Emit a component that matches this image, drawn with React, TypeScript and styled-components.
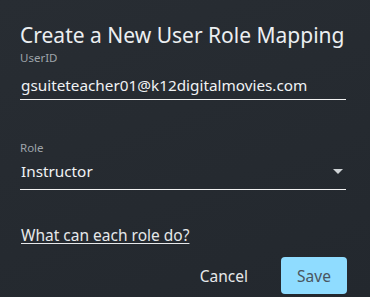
import React from 'react';
import styled, { createGlobalStyle } from 'styled-components';

const GlobalStyle = createGlobalStyle`
  html, body {
    margin: 0;
    padding: 0;
    background: #252a30;
  }
  body {
    font-family: 'Noto Sans', 'Open Sans', sans-serif;
  }
`;

const Dialog = styled.div`
  width: 370px;
  height: 297px;
  box-sizing: border-box;
  padding: 21px 24px 0 20px;
  background: linear-gradient(160deg, #282d33 0%, #23282e 100%);
  color: #e6e8ea;
  display: flex;
  flex-direction: column;
`;

const Title = styled.h2`
  margin: 0;
  font-size: 21px;
  font-weight: 400;
  line-height: 28px;
  color: #eceff1;
  white-space: nowrap;
`;

const Field = styled.div<{ gap: number }>`
  margin-top: ${(p) => p.gap}px;
  display: flex;
  flex-direction: column;
`;

const Label = styled.label`
  font-size: 11.5px;
  line-height: 14px;
  color: #9ea4aa;
`;

const InputRow = styled.div<{ top: number; bottom: number }>`
  display: flex;
  align-items: center;
  justify-content: space-between;
  padding: ${(p) => p.top}px 0 ${(p) => p.bottom}px 1px;
  line-height: 22px;
  border-bottom: 1.5px solid #f2f2f2;
  font-size: 15.3px;
  color: #f0f2f4;
`;

const Caret = styled.div`
  width: 0;
  height: 0;
  margin-right: 3px;
  border-left: 5px solid transparent;
  border-right: 5px solid transparent;
  border-top: 5px solid #cfd3d6;
`;

const HelpLink = styled.a`
  margin-top: 35px;
  padding-left: 1px;
  font-size: 15.5px;
  line-height: 20px;
  color: #e6e8ea;
  text-decoration: underline;
  text-underline-offset: 2px;
  align-self: flex-start;
`;

const Actions = styled.div`
  margin-top: 12px;
  margin-right: -1px;
  display: flex;
  justify-content: flex-end;
  align-items: center;
  gap: 33px;
`;

const TextButton = styled.button`
  background: none;
  border: none;
  padding: 0;
  font-family: inherit;
  font-size: 15.5px;
  color: #e6e8ea;
`;

const SaveButton = styled.button`
  width: 66px;
  height: 37px;
  border: none;
  border-radius: 4px;
  background: #8fdcff;
  color: #4a5560;
  font-family: inherit;
  font-size: 15.5px;
`;

export default function App() {
  return (
    <>
      <GlobalStyle />
      <Dialog>
        <Title>Create a New User Role Mapping</Title>
        <Field gap={2}>
          <Label>UserID</Label>
          <InputRow top={9} bottom={3}>gsuiteteacher01@k12digitalmovies.com</InputRow>
        </Field>
        <Field gap={41}>
          <Label>Role</Label>
          <InputRow top={5} bottom={7}>
            <span>Instructor</span>
            <Caret />
          </InputRow>
        </Field>
        <HelpLink href="#">What can each role do?</HelpLink>
        <Actions>
          <TextButton>Cancel</TextButton>
          <SaveButton>Save</SaveButton>
        </Actions>
      </Dialog>
    </>
  );
}
